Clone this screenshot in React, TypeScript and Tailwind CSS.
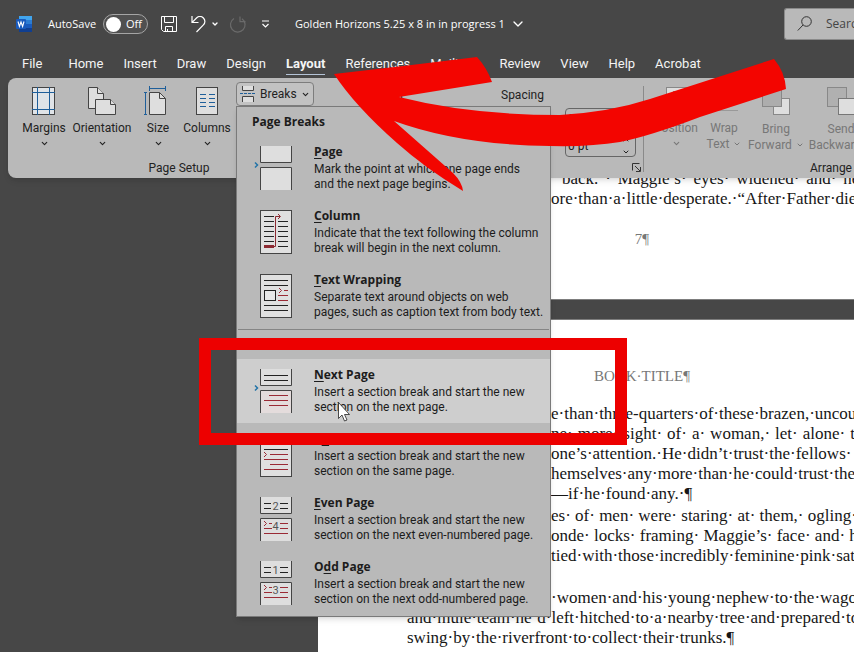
import type { ReactNode } from "react";
import { ChevronDown } from "lucide-react";

const TABS = [
  "Home",
  "Insert",
  "Draw",
  "Design",
  "Layout",
  "References",
  "Mailings",
  "Review",
  "View",
  "Help",
  "Acrobat",
];

interface BreakItem {
  id: string;
  before?: string;
  accessKey: string;
  after: string;
  lines: [string, string];
  icon: ReactNode;
  active?: boolean;
}

function SplitPages({ children }: { children?: ReactNode }) {
  return (
    <>
      <rect x="8" y="0" width="32" height="17" fill="#dedede" />
      <path d="M8.5 0V16.5H39.5V0" stroke="#444" fill="none" />
      <rect x="8" y="21" width="32" height="23" fill="#dedede" />
      <path d="M8.5 44V21.5H39.5V44" stroke="#444" fill="none" />
      {children}
    </>
  );
}

function SinglePage({ children }: { children?: ReactNode }) {
  return (
    <>
      <rect x="8.5" y="0.5" width="31" height="43" fill="#e0e0e0" stroke="#444" />
      {children}
    </>
  );
}

const BLUE_ARROW = (
  <path d="M3 16.5l2.5 2.5L3 21.5" stroke="#2374a8" strokeWidth="1.5" fill="none" />
);

const PAGE_BREAKS: BreakItem[] = [
  {
    id: "page",
    accessKey: "P",
    after: "age",
    lines: [
      "Mark the point at which one page ends",
      "and the next page begins.",
    ],
    icon: <SplitPages>{BLUE_ARROW}</SplitPages>,
  },
  {
    id: "column",
    accessKey: "C",
    after: "olumn",
    lines: [
      "Indicate that the text following the column",
      "break will begin in the next column.",
    ],
    icon: (
      <SinglePage>
        <path
          d="M12 6.5h10M12 11.5h10M12 16.5h10M12 21.5h10M12 26.5h10M12 31.5h10M26 11.5h10M26 16.5h10M26 21.5h10M26 26.5h10M26 31.5h10M26 36.5h10"
          stroke="#222"
        />
        <rect x="12" y="35" width="10" height="3" fill="#8c2a32" />
        <path d="M22 36.5h1.5V6.5H28M26 4l2.5 2.5L26 9" stroke="#8c2a32" fill="none" />
      </SinglePage>
    ),
  },
  {
    id: "text-wrapping",
    accessKey: "T",
    after: "ext Wrapping",
    lines: [
      "Separate text around objects on web",
      "pages, such as caption text from body text.",
    ],
    icon: (
      <SinglePage>
        <path d="M12 6.5h24M12 11.5h24M12 31.5h24M12 36.5h24" stroke="#222" />
        <rect x="12.5" y="16.5" width="11" height="10" fill="#e8e8e8" stroke="#222" />
        <path
          d="M27 14l2.5 2.5L27 19M32 16.5h4M26 21.5h10M26 26.5h10"
          stroke="#9a2a35"
          fill="none"
        />
      </SinglePage>
    ),
  },
];

const SECTION_BREAKS: BreakItem[] = [
  {
    id: "next-page",
    accessKey: "N",
    after: "ext Page",
    lines: [
      "Insert a section break and start the new",
      "section on the next page.",
    ],
    active: true,
    icon: (
      <SplitPages>
        {BLUE_ARROW}
        <rect x="9" y="22" width="30" height="22" fill="#e4dcdc" />
        <path d="M12 6.5h24M12 11.5h24" stroke="#222" />
        <path d="M17 26.5h19M12 31.5h24M17 36.5h19" stroke="#9a2a35" />
      </SplitPages>
    ),
  },
  {
    id: "continuous",
    before: "C",
    accessKey: "o",
    after: "ntinuous",
    lines: [
      "Insert a section break and start the new",
      "section on the same page.",
    ],
    icon: (
      <SinglePage>
        <path d="M12 6.5h24M12 11.5h24M12 16.5h24" stroke="#222" />
        <path
          d="M12 19l2.5 2.5L12 24M18 21.5h18M12 26.5h24M18 31.5h18M12 36.5h24"
          stroke="#9a2a35"
          fill="none"
        />
      </SinglePage>
    ),
  },
  {
    id: "even-page",
    accessKey: "E",
    after: "ven Page",
    lines: [
      "Insert a section break and start the new",
      "section on the next even-numbered page.",
    ],
    icon: <NumberedPages top="2" bottom="4" />,
  },
  {
    id: "odd-page",
    before: "O",
    accessKey: "d",
    after: "d Page",
    lines: [
      "Insert a section break and start the new",
      "section on the next odd-numbered page.",
    ],
    icon: <NumberedPages top="1" bottom="3" />,
  },
];

function NumberedPages({ top, bottom }: { top: string; bottom: string }) {
  return (
    <SplitPages>
      <path d="M12 6.5h7M12 11.5h7M28 6.5h8M28 11.5h8" stroke="#222" />
      <path
        d="M12 24l2.5 2.5L12 29M17 26.5h3M12 31.5h8M28 26.5h8M28 31.5h8M12 36.5h24"
        stroke="#9a2a35"
        fill="none"
      />
      <text x="23.5" y="13" fontSize="11" textAnchor="middle" fill="#555">
        {top}
      </text>
      <text x="23.5" y="33" fontSize="11" textAnchor="middle" fill="#555">
        {bottom}
      </text>
    </SplitPages>
  );
}

function BreakRow({ item }: { item: BreakItem }) {
  return (
    <button
      type="button"
      role="menuitem"
      className={
        item.active
          ? "flex h-16 w-full gap-[22px] bg-[#cecece] pl-[15px] text-left"
          : "flex h-16 w-full gap-[22px] pl-[15px] text-left"
      }
    >
      <svg width="40" height="44" className="mt-[10px] shrink-0">
        {item.icon}
      </svg>
      <span className="block pt-[7px] whitespace-nowrap">
        <span className="mb-[2px] block font-['Open_Sans',sans-serif] text-[12px] leading-[17px] font-bold">
          {item.before}
          <span className="underline underline-offset-2">{item.accessKey}</span>
          {item.after}
        </span>
        {item.lines.map((line) => (
          <span key={line} className="block text-[12px] leading-[15px]">
            {line}
          </span>
        ))}
      </span>
    </button>
  );
}

function BreaksMenu() {
  return (
    <div
      role="menu"
      className="absolute top-[24px] left-0 z-20 w-[315px] border border-[#7a7a7a] bg-[#b9b9b9] pb-px text-[#1c1c1c] shadow-md"
    >
      <h2 className="h-[29px] pl-[15px] font-['Open_Sans',sans-serif] text-[12px] leading-[30px] font-bold">
        Page Breaks
      </h2>
      {PAGE_BREAKS.map((item) => (
        <BreakRow key={item.id} item={item} />
      ))}
      <hr className="mx-px mt-px mb-px border-[#858585]" />
      <h2 className="h-[28px] pl-[15px] font-['Open_Sans',sans-serif] text-[12px] leading-[28px] font-bold">
        Section Breaks
      </h2>
      {SECTION_BREAKS.map((item) => (
        <BreakRow key={item.id} item={item} />
      ))}
    </div>
  );
}

function TitleBar() {
  return (
    <header className="flex h-12 shrink-0 items-center pl-4 font-['Open_Sans',sans-serif] text-[11px] text-white">
      <svg width="16" height="16" viewBox="0 0 16 16" className="shrink-0">
        <rect x="3" y="0" width="13" height="16" rx="1" fill="#2b7cd3" />
        <rect x="3" y="0" width="13" height="4" fill="#41a5ee" />
        <rect x="3" y="8" width="13" height="4" fill="#185abd" />
        <rect x="3" y="12" width="13" height="4" fill="#103f91" />
        <rect x="0" y="3" width="10" height="10" rx="1" fill="#185abd" />
        <path d="M2 5.5l1.4 5L5 6l1.6 4.5 1.4-5" stroke="#fff" strokeWidth="1.1" fill="none" />
      </svg>
      <label htmlFor="autosave" className="ml-4 w-[55px] shrink-0">
        AutoSave
      </label>
      <span className="flex h-5 w-[45px] shrink-0 items-center gap-[5px] rounded-full border border-[#a5a5a5] bg-[#505050] pl-[2px]">
        <input
          id="autosave"
          type="checkbox"
          className="h-[15px] w-[15px] appearance-none rounded-full bg-white"
        />
        <span>Off</span>
      </span>
      <button type="button" aria-label="Save" className="ml-[13px] shrink-0">
        <svg width="16" height="16" viewBox="0 0 16 16" fill="none" stroke="#fff">
          <path d="M.5.5h15v15H2.5l-2-2zM3.5.5v6h9v-6M4.5 15.5v-5h7v5M6.5 15.5v-2.5" />
        </svg>
      </button>
      <button type="button" aria-label="Undo" className="ml-[14px] flex shrink-0 items-center gap-1">
        <svg width="16" height="17" viewBox="0 0 16 17" fill="none" stroke="#fff" strokeWidth="1.2">
          <path d="M1 0v6.5h6.5M1.2 6.3L5.5 2c2.2-2 5-1.8 6.9 0 2 2 2 4.900 0 6.900L5.500 16" />
        </svg>
        <ChevronDown size={8} strokeWidth={4} />
      </button>
      <button type="button" aria-label="Redo" className="ml-[10px] shrink-0">
        <svg width="18" height="17" viewBox="0 0 18 17" fill="none" stroke="#6a6a6a" strokeWidth="1.2">
          <path d="M11 .6v5h5.5M5 2.5A7.3 7.3 0 1 0 13 2.800l2.500 2.500" />
        </svg>
      </button>
      <button type="button" aria-label="Customize toolbar" className="ml-[14px] shrink-0">
        <svg width="9" height="8" viewBox="0 0 9 8" fill="none" stroke="#fff" strokeWidth="1.2">
          <path d="M1 1h7M1.5 4l3 3 3-3" />
        </svg>
      </button>
      <button type="button" className="ml-[25px] flex shrink-0 items-center gap-[5px] whitespace-nowrap">
        Golden Horizons 5.25 x 8 in in progress 1
        <ChevronDown size={16} strokeWidth={2} />
      </button>
      <div className="ml-auto flex h-8 w-[70px] shrink-0 items-center overflow-hidden rounded-l-[3px] border border-r-0 border-[#8a8a8a] bg-[#b9b9b9] pl-3">
        <svg width="16" height="16" viewBox="0 0 16 16" fill="none" stroke="#333" className="shrink-0">
          <circle cx="9.5" cy="5.5" r="4.8" />
          <path d="M6 9L.8 14.5" />
        </svg>
        <input
          type="text"
          aria-label="Search"
          placeholder="Search"
          className="ml-[13px] w-[60px] shrink-0 bg-transparent text-[12px] placeholder:text-[#444]"
        />
      </div>
    </header>
  );
}

function RibbonTabs() {
  return (
    <nav className="flex h-[30px] shrink-0 items-center pt-[2px] pl-[22px] text-[13px] leading-5 text-[#f4f4f4]">
      <a href="#file" className="mr-[26px]">
        File
      </a>
      <div className="flex gap-5">
        {TABS.map((tab) => (
          <a
            key={tab}
            href={`#${tab.toLowerCase()}`}
            className={
              tab === "Layout"
                ? "font-bold shadow-[0_1px_0_#b4c3d6]"
                : undefined
            }
          >
            {tab}
          </a>
        ))}
      </div>
    </nav>
  );
}

interface RibbonButtonProps {
  label: string;
  className: string;
  icon: ReactNode;
}

function RibbonButton({ label, className, icon }: RibbonButtonProps) {
  return (
    <button type="button" className={className}>
      <svg width="30" height="30" fill="none">
        {icon}
      </svg>
      <span className="mt-1 leading-4">{label}</span>
      <ChevronDown size={9} strokeWidth={3} className="mt-[3px]" />
    </button>
  );
}

function PageSetupGroup() {
  return (
    <section className="flex w-[322px] shrink-0 flex-col">
      <div className="flex h-[72px]">
        <RibbonButton
          label="Margins"
          className="flex w-[52px] flex-col items-center"
          icon={
            <>
              <rect x="3.5" y="1.5" width="22" height="27" fill="#e0e4e8" stroke="#444" />
              <path d="M8.5 1v28M20.5 1v28M3 6.5h23M3 23.5h23" stroke="#1f5f9a" />
            </>
          }
        />
        <RibbonButton
          label="Orientation"
          className="flex w-16 flex-col items-center"
          icon={
            <g fill="#dedede" stroke="#444">
              <path d="M1.5 1.5h9l6 6v15h-15z" />
              <path d="M10.5 1.5v6h6" />
              <path d="M8.5 13.5h15l5 5v10h-20z" />
              <path d="M23.5 13.5v5h5" />
            </g>
          }
        />
        <RibbonButton
          label="Size"
          className="flex w-12 flex-col items-center"
          icon={
            <>
              <path d="M6.5 6.5h10l6 6v16h-16z" fill="#dedede" stroke="#444" />
              <path d="M16.5 6.5v6h6" stroke="#444" />
              <path
                d="M6.5 2.5h16M6.5 0v5M22.5 0v5M2.5 6.5v22M1 6.5h3M1 28.5h3"
                stroke="#1f5f9a"
              />
            </>
          }
        />
        <RibbonButton
          label="Columns"
          className="flex w-[50px] flex-col items-center"
          icon={
            <>
              <rect x="4.5" y="1.5" width="21" height="27" fill="#dedede" stroke="#444" />
              <path
                d="M8 8.5h6M8 12.5h6M8 16.5h6M8 20.5h6M17 8.5h6M17 12.5h6M17 16.5h6M17 20.5h6"
                stroke="#1f5f9a"
              />
            </>
          }
        />
        <div className="relative -mt-1 ml-1">
          <button
            type="button"
            aria-haspopup="menu"
            className="flex h-6 w-[78px] items-center gap-1 rounded-[4px] border border-[#7d7d7d] bg-[#c2c2c2] pl-[3px]"
          >
            <svg width="16" height="16" fill="none">
              <rect x="2" y="0" width="12" height="5" fill="#dedede" />
              <rect x="2" y="10" width="12" height="6" fill="#dedede" />
              <path d="M2.5 0v4.5h11V0M2.5 16v-5.5h11V16" stroke="#444" />
              <path d="M0 7.5h16" stroke="#1f5f9a" strokeDasharray="3 1" />
            </svg>
            Breaks
            <ChevronDown size={9} strokeWidth={3} />
          </button>
          <BreaksMenu />
        </div>
      </div>
      <h3 className="text-center leading-5">Page Setup</h3>
    </section>
  );
}

function ParagraphGroup() {
  return (
    <section className="mb-[6px] flex w-[304px] shrink-0 border-r border-[#8a8a8a] pl-[30px]">
      <span className="w-[131px] leading-[18px]">Indent</span>
      <span className="w-16 leading-[18px]">Spacing</span>
      <div className="flex flex-col pt-[22px]">
        <div className="flex h-[50px] w-[71px] flex-col justify-between rounded-[4px] border border-[#666] pr-1 pl-[2px]">
          {["Spacing before", "Spacing after"].map((name) => (
            <div key={name} className="flex items-center">
              <input
                type="text"
                aria-label={name}
                defaultValue="0 pt"
                className="w-[54px] bg-transparent leading-5"
              />
              <span className="flex flex-col gap-1">
                <ChevronDown size={8} strokeWidth={3} className="rotate-180" />
                <ChevronDown size={8} strokeWidth={3} />
              </span>
            </div>
          ))}
        </div>
        <button type="button" aria-label="Paragraph settings" className="mt-[6px] ml-[67px]">
          <svg width="9" height="9" fill="none" stroke="#333">
            <path d="M.5 7.5v-7h7M3 3l5 5M8.5 4v4.5H4" />
          </svg>
        </button>
      </div>
    </section>
  );
}

function ArrangeGroup() {
  return (
    <section className="flex shrink-0 flex-col">
      <div className="flex h-[72px] text-[#777]">
        <RibbonButton
          label="Position"
          className="ml-2 flex w-[48px] flex-col items-center"
          icon={
            <>
              <rect x="5.5" y="1.5" width="22" height="27" fill="#dedede" stroke="#888" />
              <rect x="12.5" y="5.5" width="9" height="8" stroke="#888" />
            </>
          }
        />
        <button type="button" className="flex w-12 flex-col items-center">
          <svg width="30" height="30" stroke="#999">
            <path d="M1 4.5h28M1 24.5h28" />
          </svg>
          <span className="mt-1 leading-4">Wrap</span>
          <span className="flex items-center gap-1 leading-4">
            Text <ChevronDown size={8} strokeWidth={3} />
          </span>
        </button>
        <button type="button" className="flex w-14 flex-col items-center">
          <svg width="30" height="30">
            <rect x="12.5" y="12.5" width="16" height="16" fill="#dedede" stroke="#888" />
            <rect x="1.5" y="1.5" width="19" height="19" fill="#adadad" stroke="#888" />
          </svg>
          <span className="mt-[5px] leading-4">Bring</span>
          <span className="flex items-center gap-1 leading-4">
            Forward <ChevronDown size={8} strokeWidth={3} />
          </span>
        </button>
        <button type="button" className="flex w-[74px] flex-col items-center">
          <svg width="30" height="30">
            <rect x="1.5" y="1.5" width="19" height="19" fill="#b0b0b0" stroke="#888" />
            <rect x="12.5" y="12.5" width="16" height="16" fill="#dedede" stroke="#777" />
          </svg>
          <span className="mt-[5px] leading-4">Send</span>
          <span className="flex items-center gap-1 leading-4">
            Backward <ChevronDown size={8} strokeWidth={3} />
          </span>
        </button>
      </div>
      <h3 className="pl-[166px] leading-5">Arrange</h3>
    </section>
  );
}

function Ribbon() {
  return (
    <div className="relative z-10 ml-2 flex h-[100px] shrink-0 rounded-l-lg bg-[#b9b9b9] pt-2 pl-[10px] text-[12px] text-[#222] shadow-md">
      <PageSetupGroup />
      <ParagraphGroup />
      <ArrangeGroup />
    </div>
  );
}

// the pilcrows and middle dots are Word's formatting marks
function DocumentPages() {
  return (
    <main className="-mt-[9px] pl-[318px] font-['Liberation_Serif',serif] text-[17px] leading-5 whitespace-nowrap text-[#161616]">
      <article className="border-b border-[#7d7d7d] bg-white pb-[50px] pl-[89px]">
        <div className="w-[470px]">
          <p className="pr-3 pl-[155px] [text-align-last:justify]">
            back. · Maggie’s· eyes· widened· and· he·
          </p>
          <p className="pl-36">ore·than·a·little·desperate.·“After·Father·died</p>
          <p className="mt-5 text-center text-[15px] text-[#777]">7¶</p>
        </div>
      </article>
      <article className="mt-[19px] border-t border-[#7d7d7d] bg-white pt-[46px] pb-10 pl-[89px]">
        <div className="w-[470px]">
          <h1 className="text-center text-[15px] text-[#777]">BOOK·TITLE¶</h1>
          <div className="mt-[18px] flex flex-col gap-[2px]">
            <div className="pl-36">
              <p>e·than·three-quarters·of·these·brazen,·uncouth</p>
              <p className="pr-[6px] [text-align-last:justify]">
                ne· more· sight· of· a· woman,· let· alone· the
              </p>
              <p>one’s·attention.·He·didn’t·trust·the·fellows·</p>
              <p>hemselves·any·more·than·he·could·trust·them</p>
              <p>—if·he·found·any.·¶</p>
            </div>
            <div className="pl-36">
              <p className="pr-[6px] [text-align-last:justify]">
                es· of· men· were· staring· at· them,· ogling· the
              </p>
              <p className="pr-[6px] [text-align-last:justify]">
                onde· locks· framing· Maggie’s· face· and· her
              </p>
              <p>tied·with·those·incredibly·feminine·pink·satin</p>
              <p>&nbsp;</p>
            </div>
            <div>
              <p className="pl-36">·women·and·his·young·nephew·to·the·wagon</p>
              <p>and·mule·team·he’d·left·hitched·to·a·nearby·tree·and·prepared·to</p>
              <p>swing·by·the·riverfront·to·collect·their·trunks.¶</p>
            </div>
            <p className="pl-7">“Could·I·Trouble·you·to·help·me·load·them·all?”</p>
          </div>
        </div>
      </article>
    </main>
  );
}

function Annotations() {
  return (
    <>
      <svg
        width="854"
        height="200"
        className="pointer-events-none absolute top-0 left-0 z-30"
      >
        <path
          d="M334 74Q405 66 477 57Q487 68 492 82L399 97Q470 115 560 115Q610 112 650 99L774 59Q785 72 786 89L700 117Q650 136 620 142Q590 147 550 146Q460 145 394 121L453 173Q462 182 463 191Q425 168 397 143Q355 106 334 74Z"
          fill="#f30500"
        />
      </svg>
      <div className="pointer-events-none absolute top-[338px] left-[199px] z-30 h-[107px] w-[428px] border-[12px] border-[#ed0000]" />
      <svg
        width="13"
        height="20"
        className="pointer-events-none absolute top-[402px] left-[338px] z-30"
      >
        <path
          d="M.5.5v16l3.5-3.500 2.500 6 2.500-1-2.500-5.500h5z"
          fill="#fff"
          stroke="#222"
          strokeWidth="0.8"
        />
      </svg>
    </>
  );
}

export default function App() {
  return (
    <div className="relative flex h-screen flex-col overflow-hidden bg-[#474747] font-[Roboto,'Noto_Sans',sans-serif]">
      <TitleBar />
      <RibbonTabs />
      <Ribbon />
      <DocumentPages />
      <Annotations />
    </div>
  );
}
